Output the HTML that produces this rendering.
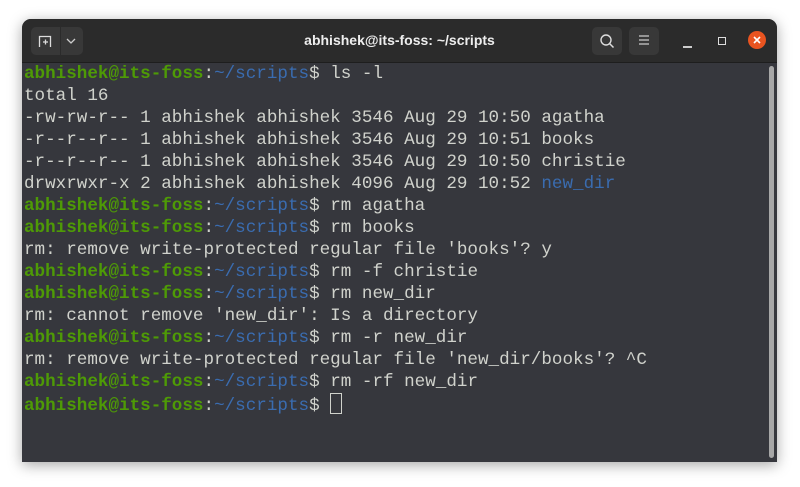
<!DOCTYPE html>
<html><head><style>
body{margin:0;width:800px;height:487px;background:#fff;position:relative;overflow:hidden;font-family:"Liberation Sans",sans-serif}
.win{position:absolute;left:22px;top:19px;width:755px;height:443px;background:#36373d;border-radius:9px 9px 0 0;box-shadow:0 3px 14px rgba(0,0,0,.35);overflow:hidden}
.tb{position:absolute;left:0;top:0;width:100%;height:43px;background:#2b2b2b;border-bottom:1px solid #1e1e1e}
.btn{position:absolute;top:8px;height:28px;background:#383838;border-radius:5px}
.title{position:absolute;left:0;width:100%;top:13px;text-align:center;color:#eee;font-weight:bold;font-size:14px}
.term{position:absolute;left:2px;top:44px;font-family:"Liberation Mono",monospace;font-size:17.6px;line-height:22px;color:#d0d2cc;white-space:pre}
.g{color:#4e9a06;font-weight:bold}.b{color:#3a6cb0}
.sb{position:absolute;left:747px;top:47px;width:5px;height:392px;background:#a7a7a7;border-radius:3px}
</style></head><body>
<div class="win">
<div class="tb">
<div class="btn" style="left:9px;width:52px"></div>
<div style="position:absolute;left:38px;top:8px;width:1px;height:28px;background:#2b2b2b"></div>
<svg style="position:absolute;left:16px;top:15px" width="14" height="14" viewBox="0 0 14 14"><path d="M1.5 13V2.5h11V13M5 8h5M7.5 5.5v5" stroke="#ddd" stroke-width="1.3" fill="none"/></svg>
<svg style="position:absolute;left:43px;top:18px" width="12" height="8"><path d="M2 2l4 4 4-4" stroke="#ccc" stroke-width="1.3" fill="none"/></svg>
<div class="title">abhishek@its-foss: ~/scripts</div>
<div class="btn" style="left:570px;width:30px"></div>
<svg style="position:absolute;left:577px;top:14px" width="16" height="16"><circle cx="7" cy="7" r="5" stroke="#ddd" stroke-width="1.4" fill="none"/><path d="M10.5 10.5l4 4" stroke="#ddd" stroke-width="1.5"/></svg>
<div class="btn" style="left:607px;width:30px"></div>
<svg style="position:absolute;left:615px;top:15px" width="14" height="12"><path d="M2 2h10M2 6h10M2 10h10" stroke="#ccc" stroke-width="1.3"/></svg>
<div style="position:absolute;left:661px;top:27px;width:9px;height:1.5px;background:#ccc"></div>
<div style="position:absolute;left:696px;top:18px;width:6px;height:6px;border:1.3px solid #ddd"></div>
<div style="position:absolute;left:726px;top:12px;width:18px;height:18px;border-radius:50%;background:#e95420"></div>
<svg style="position:absolute;left:730px;top:16px" width="10" height="10"><path d="M2 2l6 6M8 2l-6 6" stroke="#fff" stroke-width="1.6"/></svg>
</div>
<div class="term"><span class="g">abhishek@its-foss</span>:<span class="b">~/scripts</span>$ ls -l
total 16
-rw-rw-r-- 1 abhishek abhishek 3546 Aug 29 10:50 agatha
-r--r--r-- 1 abhishek abhishek 3546 Aug 29 10:51 books
-r--r--r-- 1 abhishek abhishek 3546 Aug 29 10:50 christie
drwxrwxr-x 2 abhishek abhishek 4096 Aug 29 10:52 <span class="b">new_dir</span>
<span class="g">abhishek@its-foss</span>:<span class="b">~/scripts</span>$ rm agatha
<span class="g">abhishek@its-foss</span>:<span class="b">~/scripts</span>$ rm books
rm: remove write-protected regular file 'books'? y
<span class="g">abhishek@its-foss</span>:<span class="b">~/scripts</span>$ rm -f christie
<span class="g">abhishek@its-foss</span>:<span class="b">~/scripts</span>$ rm new_dir
rm: cannot remove 'new_dir': Is a directory
<span class="g">abhishek@its-foss</span>:<span class="b">~/scripts</span>$ rm -r new_dir
rm: remove write-protected regular file 'new_dir/books'? ^C
<span class="g">abhishek@its-foss</span>:<span class="b">~/scripts</span>$ rm -rf new_dir
<span class="g">abhishek@its-foss</span>:<span class="b">~/scripts</span>$ <span style="display:inline-block;width:10px;height:19px;border:1px solid #d0d2cc;vertical-align:-4px"></span></div>
<div class="sb"></div>
</div>
</body></html>
